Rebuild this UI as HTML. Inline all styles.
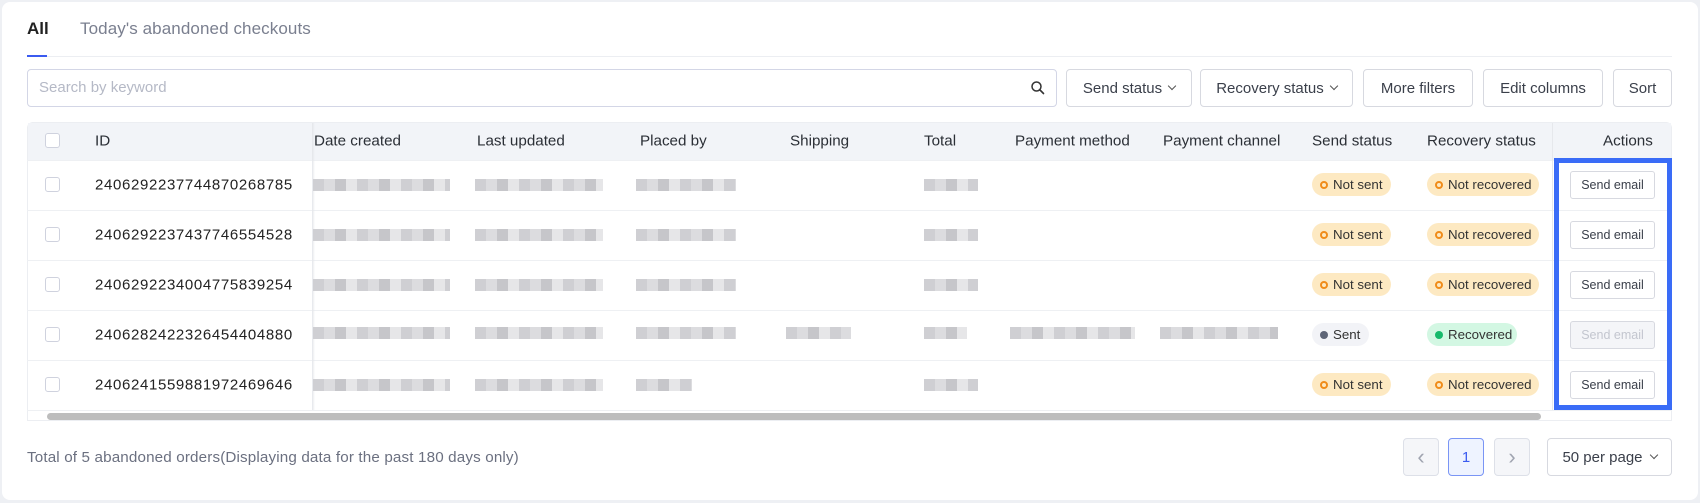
<!DOCTYPE html>
<html><head><meta charset="utf-8"><style>
*{box-sizing:border-box;margin:0;padding:0}
body{width:1700px;height:503px;background:#eef0f4;font-family:"Liberation Sans",sans-serif;color:#2b2f36;position:relative;overflow:hidden}
.a{position:absolute}
.card{left:2px;top:2px;width:1696px;height:498px;background:#fff;border-radius:8px}
.btn{position:absolute;top:69px;height:38px;border:1px solid #d7d9e0;border-radius:4px;background:#fff;font-size:15px;color:#3a3f4a;display:flex;align-items:center;justify-content:center;gap:7px}
.chev{width:6px;height:6px;border-right:1.3px solid #555;border-bottom:1.3px solid #555;transform:rotate(45deg);margin-top:-4px}
.th{position:absolute;top:141px;font-size:15.2px;color:#2b2f36;transform:translateY(-50%)}
.cb{position:absolute;left:45px;width:15px;height:15px;border:1.3px solid #cfd2de;border-radius:3px;background:#fff}
.id{position:absolute;left:95px;font-size:15px;color:#222;transform:translateY(-50%);letter-spacing:0.65px}
.blur{position:absolute;height:12px;background:repeating-linear-gradient(90deg,#cfcfd3 0 11px,#dcdcdf 11px 22px,#c6c6ca 22px 33px,#e6e6e8 33px 44px)}
.badge{position:absolute;height:23px;border-radius:12px;font-size:13.3px;display:flex;align-items:center;padding-left:8px;color:#333}
.bo{background:#fde9c2}
.bo i{width:8px;height:8px;border:2px solid #f08c1a;border-radius:50%;margin-right:5px}
.se{position:absolute;left:1570px;width:85px;height:28px;border:1px solid #d7d9e0;border-radius:3px;background:#fff;font-size:12.5px;color:#3a3f4a;display:flex;align-items:center;justify-content:center}
.hl{position:absolute;left:27px;width:1645px;height:1px;background:#eef0f3}
.pg{position:absolute;top:438px;height:38px;width:36px;border:1px solid #dde0e8;border-radius:4px;background:#f5f6f9;display:flex;align-items:center;justify-content:center;font-size:15px}
</style></head><body>
<div class="a card"></div>
<div class="a" style="left:27px;top:19px;font-size:17px;font-weight:bold;color:#222">All</div>
<div class="a" style="left:80px;top:19px;font-size:17px;color:#7a7f8f;letter-spacing:0.1px">Today's abandoned checkouts</div>
<div class="a" style="left:27px;top:56px;width:1645px;height:1px;background:#eceef2"></div>
<div class="a" style="left:27px;top:55px;width:20px;height:2px;background:#3b5bf0"></div>
<div class="a" style="left:27px;top:69px;width:1030px;height:38px;border:1px solid #d3d6e6;border-radius:4px"></div>
<div class="a" style="left:39px;top:79px;font-size:15px;color:#b5b9c6">Search by keyword</div>
<svg class="a" style="left:1030px;top:80px" width="16" height="16" viewBox="0 0 16 16"><circle cx="6.5" cy="6.5" r="4.5" fill="none" stroke="#333" stroke-width="1.5"/><path d="M10 10l3.5 3.5" stroke="#333" stroke-width="1.6" stroke-linecap="round"/></svg>
<div class="btn" style="left:1066px;width:126px">Send status <span class="chev"></span></div>
<div class="btn" style="left:1200px;width:153px">Recovery status <span class="chev"></span></div>
<div class="btn" style="left:1363px;width:110px">More filters</div>
<div class="btn" style="left:1483px;width:120px">Edit columns</div>
<div class="btn" style="left:1613px;width:59px">Sort</div>

<div class="a" style="left:27px;top:122px;width:1645px;height:299px;border:1px solid #eceef2;border-radius:6px 6px 0 0;overflow:hidden"></div>
<div class="a" style="left:28px;top:123px;width:1643px;height:37px;background:#f2f4f8"></div>
<div class="hl" style="top:160px"></div><div class="hl" style="top:210px"></div><div class="hl" style="top:260px"></div><div class="hl" style="top:310px"></div><div class="hl" style="top:360px"></div><div class="hl" style="top:410px"></div>
<div class="a" style="left:312px;top:123px;width:3px;height:287px;background:linear-gradient(90deg,#e4e6ea,#fff0)"></div>
<div class="a" style="left:1552px;top:123px;width:1px;height:287px;background:#e6e8ec"></div>
<div class="a" style="left:47px;top:413px;width:1494px;height:7px;border-radius:4px;background:#bdbdbd"></div>

<div class="cb" style="top:133px"></div>
<div class="th" style="left:95px">ID</div>
<div class="th" style="left:314px">Date created</div>
<div class="th" style="left:477px">Last updated</div>
<div class="th" style="left:640px">Placed by</div>
<div class="th" style="left:790px">Shipping</div>
<div class="th" style="left:924px">Total</div>
<div class="th" style="left:1015px">Payment method</div>
<div class="th" style="left:1163px">Payment channel</div>
<div class="th" style="left:1312px">Send status</div>
<div class="th" style="left:1427px">Recovery status</div>
<div class="th" style="left:1603px">Actions</div>

<div class="cb" style="top:177px"></div><div class="id" style="top:185px">2406292237744870268785</div>
<div class="cb" style="top:227px"></div><div class="id" style="top:235px">2406292237437746554528</div>
<div class="cb" style="top:277px"></div><div class="id" style="top:285px">2406292234004775839254</div>
<div class="cb" style="top:327px"></div><div class="id" style="top:335px">2406282422326454404880</div>
<div class="cb" style="top:377px"></div><div class="id" style="top:385px">2406241559881972469646</div>

<div class="blur" style="left:313px;top:179px;width:137px"></div><div class="blur" style="left:475px;top:179px;width:128px"></div><div class="blur" style="left:636px;top:179px;width:100px"></div><div class="blur" style="left:924px;top:179px;width:54px"></div>
<div class="blur" style="left:313px;top:229px;width:137px"></div><div class="blur" style="left:475px;top:229px;width:128px"></div><div class="blur" style="left:636px;top:229px;width:100px"></div><div class="blur" style="left:924px;top:229px;width:54px"></div>
<div class="blur" style="left:313px;top:279px;width:137px"></div><div class="blur" style="left:475px;top:279px;width:128px"></div><div class="blur" style="left:636px;top:279px;width:100px"></div><div class="blur" style="left:924px;top:279px;width:54px"></div>
<div class="blur" style="left:313px;top:327px;width:137px"></div><div class="blur" style="left:475px;top:327px;width:128px"></div><div class="blur" style="left:636px;top:327px;width:100px"></div><div class="blur" style="left:786px;top:327px;width:65px"></div><div class="blur" style="left:924px;top:327px;width:43px"></div><div class="blur" style="left:1010px;top:327px;width:125px"></div><div class="blur" style="left:1160px;top:327px;width:118px"></div>
<div class="blur" style="left:313px;top:379px;width:137px"></div><div class="blur" style="left:475px;top:379px;width:128px"></div><div class="blur" style="left:636px;top:379px;width:56px"></div><div class="blur" style="left:924px;top:379px;width:54px"></div>

<div class="badge bo" style="left:1312px;top:173px;width:79px"><i></i>Not sent</div>
<div class="badge bo" style="left:1427px;top:173px;width:112px"><i></i>Not recovered</div>
<div class="badge bo" style="left:1312px;top:223px;width:79px"><i></i>Not sent</div>
<div class="badge bo" style="left:1427px;top:223px;width:112px"><i></i>Not recovered</div>
<div class="badge bo" style="left:1312px;top:273px;width:79px"><i></i>Not sent</div>
<div class="badge bo" style="left:1427px;top:273px;width:112px"><i></i>Not recovered</div>
<div class="badge" style="left:1312px;top:323px;width:57px;background:#f2f3f7"><i style="width:8px;height:8px;border-radius:50%;background:#5e6577;margin-right:5px"></i>Sent</div>
<div class="badge" style="left:1427px;top:323px;width:90px;background:#d3f7e3"><i style="width:8px;height:8px;border-radius:50%;background:#16b96b;margin-right:5px"></i>Recovered</div>
<div class="badge bo" style="left:1312px;top:373px;width:79px"><i></i>Not sent</div>
<div class="badge bo" style="left:1427px;top:373px;width:112px"><i></i>Not recovered</div>

<div class="se" style="top:171px">Send email</div>
<div class="se" style="top:221px">Send email</div>
<div class="se" style="top:271px">Send email</div>
<div class="se" style="top:321px;background:#f4f5f8;color:#c3c6cf">Send email</div>
<div class="se" style="top:371px">Send email</div>
<div class="a" style="left:1554px;top:158px;width:118px;height:252px;border:5px solid #3a6cf7"></div>

<div class="a" style="left:27px;top:449px;font-size:15.2px;color:#6b7080;letter-spacing:0.15px">Total of 5 abandoned orders(Displaying data for the past 180 days only)</div>
<div class="pg" style="left:1403px;color:#a0a4b0;font-size:22px">&#8249;</div>
<div class="pg" style="left:1448px;background:#eef3ff;border-color:#7a95f5;color:#3b5bf0">1</div>
<div class="pg" style="left:1494px;color:#a0a4b0;font-size:22px">&#8250;</div>
<div class="btn" style="left:1547px;top:438px;width:125px;gap:8px">50 per page <span class="chev"></span></div>
</body></html>
